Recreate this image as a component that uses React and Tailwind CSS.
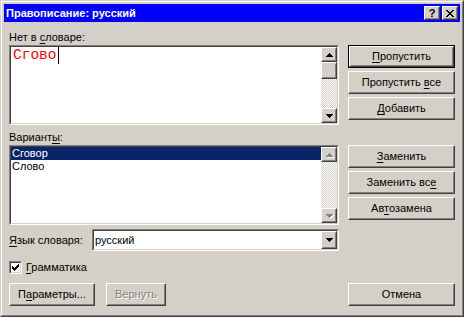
import React from "react";

const Raised = ({ className = "", innerClassName = "", children }) => (
  <div className={`border border-t-white border-l-white border-b-[#404040] border-r-[#404040] bg-[#d4d0c8] ${className}`}>
    <div className={`w-full h-full border border-t-[#d4d0c8] border-l-[#d4d0c8] border-b-[#808080] border-r-[#808080] flex items-center justify-center ${innerClassName}`}>
      {children}
    </div>
  </div>
);

const Sunken = ({ className = "", children }) => (
  <div className={`border border-t-[#808080] border-l-[#808080] border-b-white border-r-white ${className}`}>
    <div className="w-full h-full border border-t-[#404040] border-l-[#404040] border-b-[#d4d0c8] border-r-[#d4d0c8] bg-white flex">
      {children}
    </div>
  </div>
);

const U = ({ children }) => <span className="underline underline-offset-[2px] decoration-1">{children}</span>;

const Button = ({ children, isDefault, disabled, className = "" }) => {
  const inner = (
    <Raised className="w-full h-full">
      <span className={disabled ? "text-[#808080] [text-shadow:1px_1px_0_#fff]" : ""}>{children}</span>
    </Raised>
  );
  if (isDefault) {
    return <div className={`border border-black h-[23px] ${className}`}>{inner}</div>;
  }
  return <div className={`h-[23px] ${className}`}>{inner}</div>;
};

const Arrow = ({ up, disabled }) => (
  <svg width="7" height="4" viewBox="0 0 7 4" shapeRendering="crispEdges" className={disabled ? "drop-shadow-[1px_1px_0_#fff]" : ""}>
    {up ? (
      <path d="M3 0h1v1h1v1h1v1h1v1H0V3h1V2h1V1h1z" fill={disabled ? "#808080" : "#000"} />
    ) : (
      <path d="M0 0h7v1H6v1H5v1H4v1H3V3H2V2H1V1H0z" fill={disabled ? "#808080" : "#000"} />
    )}
  </svg>
);

const Track = ({ className = "" }) => (
  <div className={`bg-[repeating-conic-gradient(#d4d0c8_0_25%,#ffffff_0_50%)] bg-[length:2px_2px] ${className}`} />
);

const ScrollBar = ({ disabled, thumb }) => (
  <div className="w-[16px] h-full flex flex-col">
    <Raised className="h-[15px] shrink-0">
      <Arrow up disabled={disabled} />
    </Raised>
    {thumb && <Raised className="h-[17px] shrink-0" />}
    <Track className="flex-1" />
    <Raised className="h-[15px] shrink-0">
      <Arrow disabled={disabled} />
    </Raised>
  </div>
);

const Check = () => (
  <svg width="7" height="7" viewBox="0 0 7 7" shapeRendering="crispEdges">
    <path d="M6 0h1v3H6v1H5v1H4v1H3v1H2V6H1V5H0V2h1v1h1v1h1V3h1V2h1V1h1z" fill="#000" />
  </svg>
);

export default function App() {
  return (
    <div className="w-[464px] h-[317px] bg-[#d4d0c8] border border-t-[#d4d0c8] border-l-[#d4d0c8] border-r-[#404040] border-b-[#404040] font-['Liberation_Sans',Arial,sans-serif] text-[11px] text-black leading-[13px] select-none">
      <div className="h-full border border-t-white border-l-white border-r-[#808080] border-b-[#808080] p-[2px] flex flex-col">
        {/* Title bar */}
        <div className="h-[18px] shrink-0 bg-[#0000ff] flex items-center pl-[2px] pr-[2px]">
          <span className="text-white font-bold text-[11px] flex-1">Правописание: русский</span>
          <div className="flex gap-[2px]">
            <Raised className="w-[16px] h-[14px]">
              <span className="font-bold text-[11px] leading-[10px]">?</span>
            </Raised>
            <Raised className="w-[16px] h-[14px]">
              <svg width="8" height="7" viewBox="0 0 8 7" shapeRendering="crispEdges">
                <path d="M0 0h2v1h1v1h2V1h1V0h2v1H7v1H6v1H5v1h1v1h1v1h1v1H6V6H5V5H3v1H2v1H0V6h1V5h1V4h1V3H2V2H1V1H0z" fill="#000" />
              </svg>
            </Raised>
          </div>
        </div>

        {/* Client */}
        <div className="flex-1 flex pl-[5px] pr-[5px] gap-[9px]">
          {/* Left column */}
          <div className="w-[330px] flex flex-col">
            <div className="h-[23px] flex items-end pb-[1px] pl-[0px]">
              <span>Нет в <U>с</U>ловаре:</span>
            </div>
            <Sunken className="h-[80px]">
              <div className="flex-1 pl-[2px] font-['Liberation_Mono','Courier_New',monospace] text-[14.5px] leading-[17px] text-[#ff0000] flex items-start">
                <span>Сгово</span>
                <span className="inline-block w-[1px] h-[17px] bg-black ml-[1px]" />
              </div>
              <ScrollBar thumb />
            </Sunken>
            <div className="h-[20px] flex items-end pb-[1px]">
              <span>Вариант<U>ы</U>:</span>
            </div>
            <Sunken className="h-[80px]">
              <div className="flex-1 flex flex-col">
                <div className="h-[13px] bg-[#0a246a] text-white pl-[1px] leading-[13px]">Сговор</div>
                <div className="h-[13px] pl-[1px] leading-[13px]">Слово</div>
              </div>
              <ScrollBar disabled />
            </Sunken>
            <div className="mt-[4px] h-[22px] flex items-center">
              <span className="w-[83px]"><U>Я</U>зык словаря:</span>
              <Sunken className="w-[247px] h-[22px]">
                <div className="flex-1 flex items-center pl-[1px]">русский</div>
                <div className="pt-[0px] pr-[0px] flex">
                  <Raised className="w-[16px] h-[18px]">
                    <Arrow />
                  </Raised>
                </div>
              </Sunken>
            </div>
            <div className="mt-[10px] h-[13px] flex items-center gap-[4px]">
              <Sunken className="w-[13px] h-[13px]">
                <div className="flex-1 flex items-center justify-center">
                  <Check />
                </div>
              </Sunken>
              <span><U>Г</U>рамматика</span>
            </div>
            <div className="mt-[9px] flex gap-[11px]">
              <Button className="w-[86px]">П<U>а</U>раметры...</Button>
              <Button className="w-[60px]" disabled>Вернуть</Button>
            </div>
          </div>

          {/* Right column */}
          <div className="w-[107px] flex flex-col">
            <div className="mt-[23px] flex flex-col gap-[3px]">
              <Button isDefault><U>П</U>ропустить</Button>
              <Button>Пропустить <U>в</U>се</Button>
              <Button><U>Д</U>обавить</Button>
            </div>
            <div className="mt-[25px] flex flex-col gap-[3px]">
              <Button><U>З</U>аменить</Button>
              <Button>Заменить вс<U>е</U></Button>
              <Button>Ав<U>т</U>озамена</Button>
            </div>
            <div className="mt-auto mb-[7px]">
              <Button>Отмена</Button>
            </div>
          </div>
        </div>
      </div>
    </div>
  );
}
